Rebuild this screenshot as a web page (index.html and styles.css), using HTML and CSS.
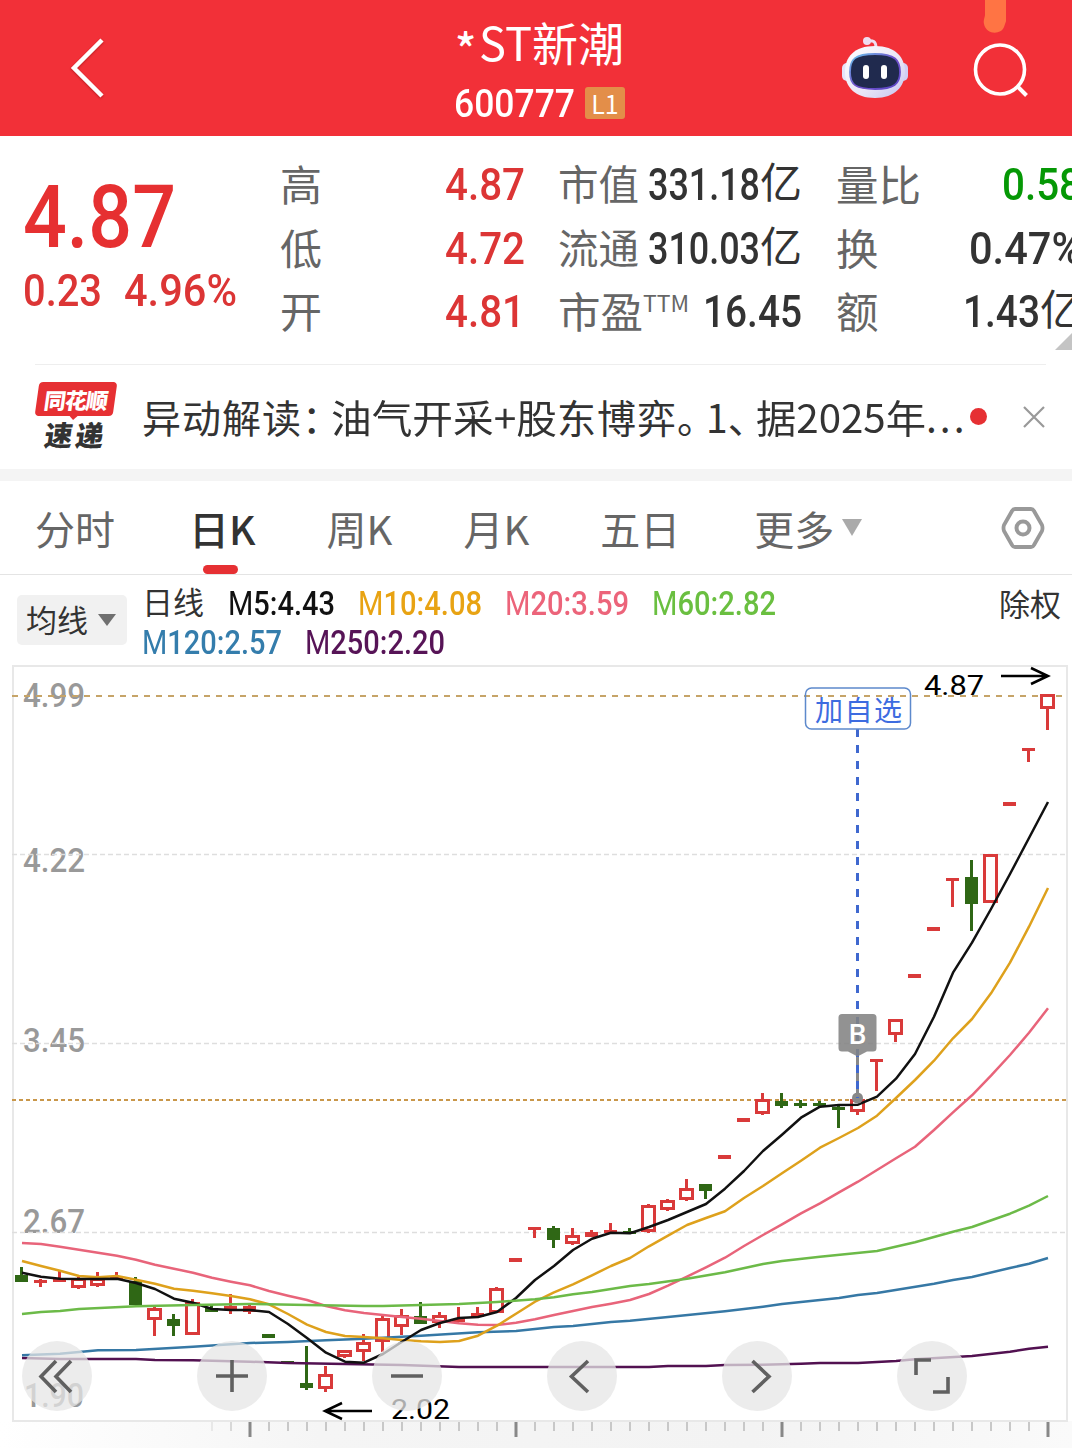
FILE: index.html
```html
<!DOCTYPE html>
<html lang="zh-CN">
<head>
  <meta charset="UTF-8">
  <meta name="viewport" content="width=device-width, initial-scale=1.0">
  <title>*ST新潮 600777</title>
  <link rel="stylesheet" href="styles.css">
</head>
<body>
  <!-- header -->
  <header class="header">
    <svg class="back" width="40" height="64" viewBox="0 0 40 64"><path d="M35 4 7 32l28 28" fill="none" stroke="#fff" stroke-width="4.5"/></svg>
    <div class="title">
      <h1><span class="star">*</span><span data-fit="53">ST</span>新潮</h1>
      <div class="code"><span class="num" data-fit="121">600777</span><span class="badge">L1</span></div>
    </div>
    <div class="actions">
      <svg class="robot" width="68" height="64" viewBox="0 0 68 64">
        <defs>
          <linearGradient id="shell" x1="0" y1="0" x2="1" y2="1"><stop offset="0" stop-color="#fff"/><stop offset=".6" stop-color="#e9e5f6"/><stop offset="1" stop-color="#c3c3f0"/></linearGradient>
          <linearGradient id="rim" x1="0" y1="0" x2="1" y2="1"><stop offset="0" stop-color="#69c6ec"/><stop offset=".5" stop-color="#7150cb"/><stop offset="1" stop-color="#5946c5"/></linearGradient>
        </defs>
        <path d="M26 5c6-1 9 0 9 7" fill="none" stroke="#eedff0" stroke-width="3"/>
        <circle cx="26" cy="5" r="4" fill="#efdcf0"/>
        <rect x="1" y="27" width="12" height="18" rx="5" fill="#e5e3fa"/>
        <rect x="55" y="27" width="12" height="18" rx="5" fill="#d1cff5"/>
        <path d="M34 10c21 0 30 12 30 26S54 62 34 62 4 51 4 36s9-26 30-26Z" fill="url(#shell)"/>
        <path d="M34 18c20 0 25 6 25 18S53 53 34 53 9 49 9 36s5-18 25-18Z" fill="#202a4e" stroke="url(#rim)" stroke-width="1.8"/>
        <rect x="22" y="29" width="6" height="14" rx="3" fill="#fff"/>
        <rect x="40" y="29" width="6" height="14" rx="3" fill="#fff"/>
      </svg>
      <svg class="search" width="58" height="58" viewBox="0 0 58 58"><circle cx="27" cy="27.500" r="24.500" fill="none" stroke="#fff" stroke-width="3.600"/><path d="m44 44 9.500 9.500" stroke="#fff" stroke-width="4"/></svg>
    </div>
    <svg class="drip" width="24" height="34" viewBox="0 0 24 34"><path d="M3 0h22v15c0 5-2 9-3 12-3 8-18 8-20-3-1-4 1-7 1-9Z" fill="#ff7444"/></svg>
  </header>

  <!-- quote -->
  <section class="quote">
    <div class="price">
      <div class="price__now num"><span data-fit="153">4.87</span></div>
      <div class="price__change num"><span data-fit="79">0.23</span><span data-fit="113">4.96%</span></div>
    </div>
    <dl class="stats stats--range">
      <div><dt>高</dt><dd class="num red"><span data-fit="80">4.87</span></dd></div>
      <div><dt>低</dt><dd class="num red"><span data-fit="80">4.72</span></dd></div>
      <div><dt>开</dt><dd class="num red"><span data-fit="80">4.81</span></dd></div>
    </dl>
    <dl class="stats stats--cap">
      <div><dt>市值</dt><dd class="num"><span data-fit="112">331.18</span><i>亿</i></dd></div>
      <div><dt>流通</dt><dd class="num"><span data-fit="112">310.03</span><i>亿</i></dd></div>
      <div><dt class="pe">市盈<sup>TTM</sup></dt><dd class="num"><span data-fit="99">16.45</span></dd></div>
    </dl>
    <dl class="stats stats--volume">
      <div><dt>量比</dt><dd class="num green"><span data-fit="80">0.58</span></dd></div>
      <div><dt>换</dt><dd class="num"><span data-fit="113">0.47%</span></dd></div>
      <div><dt>额</dt><dd class="num"><span data-fit="77">1.43</span><i>亿</i></dd></div>
    </dl>
    <span class="corner"></span>
  </section>

  <!-- news -->
  <section class="news">
    <div class="news__logo"><span class="logo__top">同花顺</span><span class="logo__bottom">速递</span></div>
    <p><span class="news__label">异动解读：</span><span data-fit="226">油气开采+股</span><span class="news__mid">东博弈。</span><span class="news__no">1、</span><span data-fit="170">据2025年</span><span class="news__more">...</span></p>
    <span class="dot"></span>
    <svg class="close" width="24" height="24" viewBox="0 0 24 24"><path d="m2 2 20 20M22 2 2 22" stroke="#999" stroke-width="2.200"/></svg>
  </section>

  <!-- tabs -->
  <nav class="tabs">
    <a>分时</a>
    <a class="active">日K</a>
    <a class="tabs__k">周K</a>
    <a class="tabs__k">月K</a>
    <a>五日</a>
    <a class="more">更多<span class="caret"></span></a>
    <svg class="setting" width="44" height="44" viewBox="0 0 44 44" fill="none" stroke="#999"><path d="M14 3h16q2 0 3 2l8 14q1 3 0 6l-8 14q-1 2-3 2H14q-2 0-3-2L3 25q-1-3 0-6l8-14q1-2 3-2Z" stroke-width="3.800"/><circle cx="22" cy="22" r="6.500" stroke-width="4"/></svg>
  </nav>

  <!-- moving averages -->
  <section class="legend">
    <button class="picker" type="button">均线<span class="caret"></span></button>
    <div class="legend__list">
      <div class="legend__row">
        <span class="legend__name">日线</span>
        <span class="num ma5" data-fit="107"><b>M</b>5:4.43</span>
        <span class="num ma10" data-fit="124"><b>M</b>10:4.08</span>
        <span class="num ma20" data-fit="124"><b>M</b>20:3.59</span>
        <span class="num ma60" data-fit="124"><b>M</b>60:2.82</span>
      </div>
      <div class="legend__row">
        <span class="num ma120" data-fit="140"><b>M</b>120:2.57</span>
        <span class="num ma250" data-fit="140"><b>M</b>250:2.20</span>
      </div>
    </div>
    <span class="rights">除权</span>
  </section>

  <!-- k-line chart -->
  <main class="chart">
    <svg id="kline" width="1072" height="786" viewBox="0 662 1072 786">
      <defs>
        <linearGradient id="ruler"><stop offset="0" stop-color="#fff"/><stop offset=".3" stop-color="#f5f5f5"/><stop offset=".7" stop-color="#f3f3f3"/><stop offset="1" stop-color="#fafafa"/></linearGradient>
      </defs>
      <rect x="0" y="1421" width="1072" height="27" fill="url(#ruler)"/>
      <rect x="13" y="666" width="1054" height="755" fill="#fff" stroke="#e8e8e8" stroke-width="2"/>
      <g class="axis">
        <text x="23" y="707" textLength="62" lengthAdjust="spacingAndGlyphs">4.99</text>
        <text x="23" y="872" textLength="62" lengthAdjust="spacingAndGlyphs">4.22</text>
        <text x="23" y="1052" textLength="62" lengthAdjust="spacingAndGlyphs">3.45</text>
        <text x="23" y="1233" textLength="62" lengthAdjust="spacingAndGlyphs">2.67</text>
        <text x="24" y="1407" textLength="60" lengthAdjust="spacingAndGlyphs">1.90</text>
      </g>
      <path d="M12 854.500h1054M12 1043.500h1054M12 1232.500h1054" stroke="#dedede" stroke-width="1.300" stroke-dasharray="5 3"/>
      <path d="M12 696h1054" stroke="#c6a468" stroke-width="2" stroke-dasharray="6 6"/>
      <path d="M12 1100h1054" stroke="#c9974a" stroke-width="2" stroke-dasharray="4 3"/>
      <g id="candles"></g>
      <g class="lines">
        <polyline stroke="#521151" points="22,1358 60,1359 136,1359 155,1360 193,1360.300 250,1361.700 288,1363 345,1364 402,1365 459,1367 649,1367 668,1366 706,1366 725,1365 763,1364.700 801,1363.700 820,1363 858,1363 896,1361 915,1359.300 972,1356 1010,1351.700 1029,1348.700 1048,1346.700"/>
        <polyline stroke="#3678a5" points="22,1355.300 60,1353.700 98,1350.300 136,1350 193,1346.700 250,1343 288,1342 326,1340.300 364,1338.700 421,1335.700 478,1332.300 516,1331 554,1327 573,1326 611,1322 630,1320.700 668,1317 725,1311.300 763,1306.700 782,1304 839,1298 858,1295 877,1293 934,1283.700 953,1280 972,1277 1010,1268 1029,1263.700 1048,1258"/>
        <polyline stroke="#e8647a" points="22,1243 41,1244 60,1246.700 79,1249.700 98,1252.700 117,1255.700 136,1259.700 155,1264.700 174,1268.700 193,1272.700 212,1277.700 231,1281.700 250,1285.300 269,1291 288,1295.700 307,1300 326,1306 345,1310.300 364,1313 383,1315 402,1317 421,1318.700 440,1321 459,1323.300 478,1324.700 497,1325 516,1322.700 535,1319.300 554,1315 573,1311 592,1307 611,1303.700 630,1300 649,1294 668,1285.700 687,1276.700 706,1267.300 725,1257.700 744,1246 763,1235 782,1224.300 801,1213.300 820,1203.300 839,1192.300 858,1181.700 877,1170 896,1158.300 915,1146.700 934,1130 953,1112.300 972,1095.300 991,1075.700 1010,1055 1029,1032.700 1048,1008.300"/>
        <polyline stroke="#dea11c" points="22,1261 41,1266 60,1270.700 79,1276 98,1277.300 117,1276 136,1279.700 155,1283.700 174,1288.700 193,1290.700 212,1293.300 231,1296 250,1299.300 269,1304.300 288,1314 307,1324.700 326,1332 345,1336 364,1337 383,1338.300 402,1340 421,1341.300 440,1342 459,1341 478,1335.700 497,1325.700 516,1313.700 535,1301.700 554,1292.300 573,1284.300 592,1275.300 611,1266 630,1258 649,1246.300 668,1235.700 687,1225 706,1218 725,1211.300 744,1198 763,1186 782,1173.300 801,1160.700 820,1147.700 839,1138 858,1128 877,1115.700 896,1098 915,1080 934,1060.700 953,1038.300 972,1019 991,993.300 1010,962.700 1029,926.700 1048,888"/>
        <polyline stroke="#111" points="22,1272.700 41,1276.700 60,1278.700 79,1279 98,1279 117,1278.700 136,1283 155,1289 174,1298.700 193,1302.700 212,1309 231,1310 250,1310 269,1312 288,1324 307,1338 326,1352.700 345,1361.700 364,1362.700 383,1354 402,1341.700 421,1330 440,1323 459,1318 478,1317 497,1312 516,1298 535,1280 554,1266 573,1250 592,1238.700 611,1232.700 630,1233.300 649,1227 668,1220 687,1212 706,1204 725,1188.700 744,1171 763,1151 782,1134.700 801,1117.700 820,1106.700 839,1105 858,1104.700 877,1096.700 896,1078.700 915,1054 934,1016.700 953,972.700 972,942.700 991,909 1010,874 1029,838 1048,802"/>
        <polyline stroke="#6cba48" points="22,1314 41,1312 60,1311 79,1309 136,1306.300 193,1305 250,1304 307,1305 364,1306 383,1306 421,1305 459,1304 497,1302 535,1299.300 554,1297.300 573,1294.300 592,1292 630,1286 649,1284 687,1278.700 725,1272.300 763,1264 782,1261 820,1256.700 877,1251 915,1242.300 953,1231.700 972,1227 1010,1213.700 1029,1205.700 1048,1196"/>
      </g>

      <!-- buy marker -->
      <circle cx="857.500" cy="1098" r="5.500" fill="#888"/>
      <path d="M857.500 1054v44" stroke="#888" stroke-width="3"/>
      <path d="M857.500 729v369" stroke="#3f68cf" stroke-width="3" stroke-dasharray="8 8"/>
      <path d="M842 1014h31q3.500 0 3.500 3.500v30.500q0 3.500-3.500 3.500h-6l-9.500 5-9.500-5h-6q-3.500 0-3.500-3.500v-30.500q0-3.500 3.500-3.500Z" fill="#838383" fill-opacity=".88"/>
      <text class="marker" x="857.500" y="1044" text-anchor="middle">B</text>
      <rect x="805.500" y="688" width="105" height="41" rx="6" fill="none" stroke="#5d89cc" stroke-width="1.500"/>
      <text class="follow" x="815" y="721" textLength="87">加自选</text>

      <!-- high / low -->
      <g class="peak">
        <text x="924" y="695" textLength="60" lengthAdjust="spacingAndGlyphs">4.87</text>
        <text x="391" y="1419" textLength="59" lengthAdjust="spacingAndGlyphs">2.02</text>
        <path d="M1001 676h46M1031 668l17 8-17 8M372 1411h-46M342 1403l-17 8 17 8"/>
      </g>

      <!-- toolbar -->
      <g class="tools">
        <circle cx="57" cy="1376" r="35"/><circle cx="232" cy="1376" r="35"/><circle cx="407" cy="1376" r="35"/>
        <circle cx="582" cy="1376" r="35"/><circle cx="757" cy="1376" r="35"/><circle cx="932" cy="1376" r="35"/>
        <path d="M56 1361l-15 15.500 15 15.500M71 1361l-15 15.500 15 15.500M216 1376h32M232 1360v32M391 1376h32M588 1361l-16.500 15.500 16.500 15.500M752.500 1361l16.500 15.500-16.500 15.500M916 1375v-15h15M948 1377v15h-15"/>
      </g>
      <g id="ticks"></g>
    </svg>
  </main>
  <script src="script.js"></script>
</body>
</html>
```
FILE: styles.css
```css
* {
  margin: 0;
  padding: 0;
  box-sizing: border-box;
}

body {
  width: 1072px;
  height: 1448px;
  overflow: hidden;
  font-family: "Noto Sans CJK SC", sans-serif;
  background: #fff;
  color: #333;
}

.num {
  font-family: Roboto, "Noto Sans CJK SC", sans-serif;
  font-weight: 500;
}

[data-fit] {
  display: inline-block;
  transform-origin: left center;
  white-space: pre;
}

.red { color: #dc3535; }
.green { color: #059805; }

/* header */
.header {
  position: relative;
  display: flex;
  height: 136px;
  padding: 0 41px 0 67px;
  background: #f23038;
  color: #fff;
}

.back {
  margin-top: 36px;
  filter: drop-shadow(0 1px 1px rgba(100, 0, 0, .4));
}

.title {
  width: 172px;
  margin-left: 347px;
  padding-top: 11px;
}

.title h1 {
  display: flex;
  padding-left: 1px;
  font-size: 46px;
  font-weight: 400;
  line-height: 60px;
}

.star {
  width: 24px;
  padding-top: 6px;
  font-size: 44px;
  font-weight: 500;
}

.code {
  display: flex;
  align-items: center;
  height: 54px;
  font-size: 39px;
}

.badge {
  width: 40px;
  height: 32px;
  margin: -2px 0 0 10px;
  border-radius: 3px;
  background: #e38e49;
  font-size: 25px;
  line-height: 33px;
  text-align: center;
}

.actions {
  display: flex;
  gap: 64px;
  margin-left: auto;
}

.robot {
  margin-top: 36px;
}

.search {
  margin-top: 42px;
}

.drip {
  position: absolute;
  top: 0;
  left: 982px;
}

/* quote */
.quote {
  position: relative;
  display: flex;
  height: 228px;
  padding: 17px 0 0 23px;
  overflow: hidden;
}

.price {
  flex: none;
  width: 257px;
  color: #e63031;
}

.price__now {
  height: 105px;
  padding-top: 13px;
  font-size: 87px;
  line-height: 102px;
}

.price__change {
  display: flex;
  gap: 22px;
  padding-top: 6px;
  font-size: 44px;
  line-height: 54px;
  color: #dc3535;
}

.stats {
  flex: none;
  font-size: 42px;
}

.stats > div {
  display: flex;
  justify-content: space-between;
  height: 63.5px;
  line-height: 63px;
}

.stats dt {
  color: #666;
  line-height: 59px;
}

.stats dd {
  display: flex;
  font-size: 44px;
  line-height: 65px;
}

.stats i {
  width: 42px;
  font-size: 42px;
  font-style: normal;
  font-weight: 400;
  line-height: 62px;
}

.stats--range {
  width: 245px;
}

.stats--cap {
  width: 244px;
  margin-left: 33px;
  font-size: 40.5px;
}

.stats--cap .pe {
  display: flex;
  font-size: 42.5px;
}

.pe sup {
  font-size: 23px;
  line-height: 44px;
}

.stats--volume {
  width: 246px;
  margin-left: 34px;
  font-size: 42.5px;
}

.corner {
  position: absolute;
  right: 0;
  bottom: 14px;
  border-bottom: 17px solid #c4c4c4;
  border-left: 17px solid transparent;
}

/* news */
.news {
  display: flex;
  align-items: center;
  height: 117px;
  padding: 0 26px 12px 35px;
  border-bottom: 12px solid #f4f4f4;
  background: linear-gradient(#eee, #eee) 35px 0 / 1011px 1px no-repeat;
}

.news__logo {
  width: 78px;
  margin: 12px 27px 0 2px;
  text-align: center;
}

.logo__top,
.logo__bottom {
  display: block;
  font-weight: 900;
  transform: skewX(-8deg);
}

.logo__top {
  position: relative;
  height: 34px;
  border-radius: 4px;
  background: #e63033;
  color: #fff;
  font-size: 22px;
  letter-spacing: -1px;
  line-height: 34px;
}

.logo__top::after {
  content: "";
  position: absolute;
  top: 33px;
  left: 34px;
  border: 5px solid transparent;
  border-top-color: #e63033;
  border-bottom: 0;
}

.logo__bottom {
  font-size: 28px;
  letter-spacing: 3px;
  line-height: 36px;
}

.news p {
  display: flex;
  width: 828px;
  padding-top: 11px;
  font-size: 39px;
  line-height: 56px;
  white-space: nowrap;
}

.news__label {
  width: 189px;
  letter-spacing: 1px;
}

.news__mid {
  width: 149px;
  letter-spacing: 1px;
  font-feature-settings: "halt";
}

.news__no {
  width: 50px;
  font-feature-settings: "halt";
}

.news__more {
  letter-spacing: 3px;
}

.dot {
  width: 17px;
  height: 17px;
  margin-top: 11px;
  border-radius: 50%;
  background: #e63033;
}

.close {
  margin: 12px 0 0 auto;
}

/* tabs */
.tabs {
  display: flex;
  align-items: center;
  height: 94px;
  padding: 0 27px 0 35px;
  border-bottom: 1px solid #e4e4e4;
  font-size: 40px;
  color: #666;
}

.tabs a {
  position: relative;
  margin-right: 74px;
  line-height: 90px;
}

.tabs .active {
  margin-right: 71px;
  color: #333;
  font-weight: 500;
}

.tabs .tabs__k {
  margin-right: 71px;
}

.active::after {
  content: "";
  position: absolute;
  bottom: -1px;
  left: 14px;
  width: 35px;
  height: 9px;
  border-radius: 5px;
  background: #e63033;
}

.more {
  display: flex;
  align-items: center;
}

.caret {
  border: 10px solid transparent;
  border-top: 17px solid #aaa;
  border-bottom: 0;
  margin-left: 8px;
}

.setting {
  margin-left: auto;
}

/* legend */
.legend {
  display: flex;
  height: 87px;
  padding: 8px 11px 0 17px;
}

.picker {
  display: flex;
  align-items: center;
  width: 110px;
  height: 50px;
  margin: 12px 15px 0 0;
  padding: 0 0 3px 9px;
  border: 0;
  border-radius: 5px;
  background: #f1f1f1;
  color: #333;
  font: 31px "Noto Sans CJK SC", sans-serif;
}

.picker .caret {
  margin: 3px 0 0 10px;
  border-width: 12px 9px 0;
  border-top-color: #707070;
}

.legend__list {
  flex: 1;
}

.legend__row {
  display: flex;
  gap: 23px;
  height: 39px;
  font-size: 33px;
  line-height: 41px;
}

.legend__row b {
  font-weight: 400;
}

.legend__name {
  margin-right: 1px;
  font-size: 31px;
  line-height: 36px;
}

.ma5 { color: #111; }
.ma10 { color: #e8a313; }
.ma20 { color: #ec647a; }
.ma60 { color: #6abf40; }
.ma120 { color: #347dac; }
.ma250 { color: #571457; }

.rights {
  font-size: 31px;
  line-height: 39px;
}

/* chart */
.chart svg {
  display: block;
}

.axis text {
  font: 500 34px Roboto, sans-serif;
  fill: #999;
}

.lines polyline {
  fill: none;
  stroke-width: 2.5;
  stroke-linejoin: round;
}

.marker {
  font: 500 28px Roboto, sans-serif;
  fill: #fff;
}

.follow {
  font: 28px "Noto Sans CJK SC", sans-serif;
  fill: #3d6ce0;
}

.peak text {
  font: 28px Roboto, sans-serif;
}

.peak path {
  fill: none;
  stroke: #000;
  stroke-width: 2.5;
}

.tools circle {
  fill: #e6e6e6;
  fill-opacity: .75;
}

.tools path {
  fill: none;
  stroke: #606060;
  stroke-width: 3.6;
}
```
FILE: script.js
```js
const RED = "#d93a3a";
const GREEN = "#2f6715";
const STEP = 19;
const START = 21.5;

// [type, body top, body bottom, high, low]  h = hollow, r = red, g = green
const candles = [
  ["g", 1275, 1282, 1267, 1282], ["r", 1280, 1283, 1279, 1287], ["r", 1279, 1282, 1271, 1282],
  ["h", 1278, 1288, 1277, 1289], ["h", 1278, 1286, 1272, 1287], ["r", 1276, 1279, 1272, 1279],
  ["g", 1281, 1305, 1277, 1305], ["h", 1308, 1320, 1305, 1336], ["g", 1319, 1326, 1314, 1336],
  ["h", 1302, 1335, 1299, 1335], ["g", 1308, 1312, 1305, 1312], ["r", 1306, 1310, 1294, 1314],
  ["r", 1306, 1312, 1303, 1314], ["g", 1334, 1338, 1334, 1338], ["g", 1361, 1364, 1361, 1364],
  ["g", 1383, 1388, 1346, 1390], ["h", 1374, 1389, 1366, 1392], ["h", 1350, 1357, 1350, 1358],
  ["h", 1342, 1352, 1334, 1361], ["h", 1318, 1342, 1315, 1352], ["h", 1315, 1327, 1309, 1335],
  ["g", 1316, 1324, 1302, 1324], ["h", 1315, 1323, 1312, 1328], ["r", 1319, 1322, 1307, 1322],
  ["r", 1313, 1317, 1307, 1317], ["h", 1288, 1313, 1287, 1313], ["r", 1258, 1262, 1258, 1262],
  ["r", 1227, 1230, 1227, 1238], ["g", 1228, 1240, 1226, 1248], ["h", 1235, 1244, 1228, 1245],
  ["r", 1232, 1237, 1230, 1237], ["r", 1230, 1233, 1223, 1234], ["g", 1231, 1234, 1228, 1234],
  ["h", 1205, 1232, 1204, 1233], ["h", 1200, 1210, 1199, 1211], ["h", 1188, 1200, 1179, 1201],
  ["g", 1184, 1191, 1184, 1199], ["r", 1155, 1159, 1155, 1159], ["r", 1118, 1122, 1118, 1122],
  ["h", 1099, 1114, 1093, 1115], ["g", 1101, 1106, 1093, 1108], ["g", 1103, 1106, 1100, 1108],
  ["g", 1103, 1106, 1101, 1108], ["g", 1107, 1110, 1105, 1128], ["h", 1099, 1112, 1099, 1115],
  ["r", 1059, 1062, 1059, 1091], ["h", 1019, 1035, 1019, 1042], ["r", 974, 978, 974, 978],
  ["r", 927, 931, 927, 931], ["r", 878, 881, 878, 907], ["g", 877, 904, 860, 931],
  ["h", 854, 903, 854, 903], ["r", 802, 806, 802, 806], ["r", 748, 751, 748, 762],
  ["h", 694, 709, 694, 730]
];

let html = "";
candles.forEach(([type, top, bottom, high, low], i) => {
  const x = START + i * STEP;
  const color = type === "g" ? GREEN : RED;
  html += `<path d="M${x} ${high}V${low}" stroke="${color}" stroke-width="3"/>`;
  if (type === "h") {
    html += `<rect x="${x - 6}" y="${top + 1.5}" width="12" height="${bottom - top - 3}" fill="#fff" stroke="${color}" stroke-width="3"/>`;
  } else {
    html += `<rect x="${x - 6.5}" y="${top}" width="13" height="${bottom - top}" fill="${color}"/>`;
  }
});
document.querySelector("#candles").innerHTML = html;

// ruler ticks, a long one every 14 days
let ticks = "";
for (let i = 10; i < 55; i++) {
  const x = START + 0.5 + i * STEP;
  const major = (i - 12) % 14 === 0;
  ticks += `<path d="M${x} 1422v${major ? 15 : 9}" stroke="${major ? "#888" : "#c8c8c8"}" stroke-width="${major ? 3 : 2}" opacity="${i < 12 ? (i - 9) * 0.33 : 1}"/>`;
}
document.querySelector("#ticks").innerHTML = ticks;

// squeeze text to the given width
document.querySelectorAll("[data-fit]").forEach((el) => {
  const width = Number(el.dataset.fit);
  const natural = el.getBoundingClientRect().width;
  el.style.transform = `scaleX(${width / natural})`;
  el.style.flex = "none";
  el.style.marginRight = `${width - natural}px`;
});
```
